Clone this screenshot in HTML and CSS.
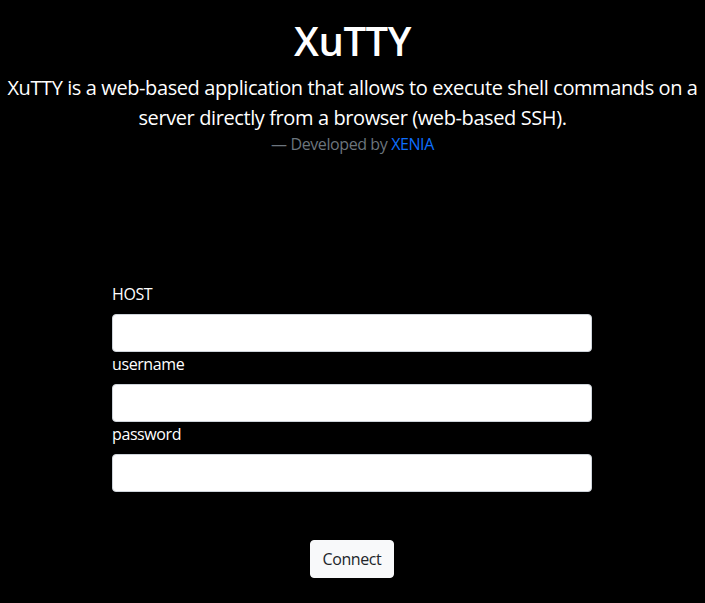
FILE: index.html
```html
<!DOCTYPE html>
<html lang="en">
<head>
<meta charset="utf-8">
<title>XuTTY</title>
<link rel="stylesheet" href="styles.css">
</head>
<body>
<header class="intro">
  <h1 class="title">XuTTY</h1>
  <p class="lead">XuTTY is a web-based application that allows to execute shell commands on a server directly from a browser (web-based SSH).</p>
  <p class="credit">— Developed by <a class="credit-link" href="#">XENIA</a></p>
</header>
<main class="login">
  <form class="login-form">
    <label class="field-label" for="host">HOST</label>
    <input class="field-input" id="host" type="text">
    <label class="field-label" for="username">username</label>
    <input class="field-input" id="username" type="text">
    <label class="field-label" for="password">password</label>
    <input class="field-input" id="password" type="password">
    <div class="actions">
      <button class="btn-connect" type="button">Connect</button>
    </div>
  </form>
</main>
</body>
</html>
```
FILE: styles.css
```css
* { box-sizing: border-box; }
html, body { height: 100%; }
body {
  margin: 0;
  background: #000;
  color: #fff;
  font-family: "Open Sans", "Noto Sans", sans-serif;
  font-size: 16px;
  line-height: 1.5;
  letter-spacing: -0.025em;
}
.intro {
  text-align: center;
  padding-top: 17px;
}
.title {
  margin: 0 0 8px;
  font-size: 40px;
  font-weight: 600;
  line-height: 1.2;
}
.lead {
  margin: 0;
  font-size: 20px;
  line-height: 30px;
}
.credit {
  margin: 0;
  font-size: 16px;
  line-height: 22px;
  color: #6c757d;
}
.credit-link {
  color: #0d6efd;
  text-decoration: none;
}
.login {
  display: flex;
  justify-content: center;
  padding: 127px 1px 0 0;
}
.login-form {
  width: 480px;
  display: flex;
  flex-direction: column;
}
.field-label {
  display: block;
  margin-bottom: 8px;
  line-height: 24px;
}
.field-input {
  display: block;
  width: 100%;
  height: 38px;
  border: 1px solid #ced4da;
  border-radius: 4px;
  background: #fff;
  padding: 6px 12px;
  font: inherit;
  letter-spacing: inherit;
}
.actions {
  display: flex;
  justify-content: center;
  margin-top: 48px;
}
.btn-connect {
  height: 38px;
  padding: 6px 12px;
  border: 1px solid #f8f9fa;
  border-radius: 4px;
  background: #f8f9fa;
  color: #212529;
  font: inherit;
  letter-spacing: inherit;
  line-height: 24px;
}
```
